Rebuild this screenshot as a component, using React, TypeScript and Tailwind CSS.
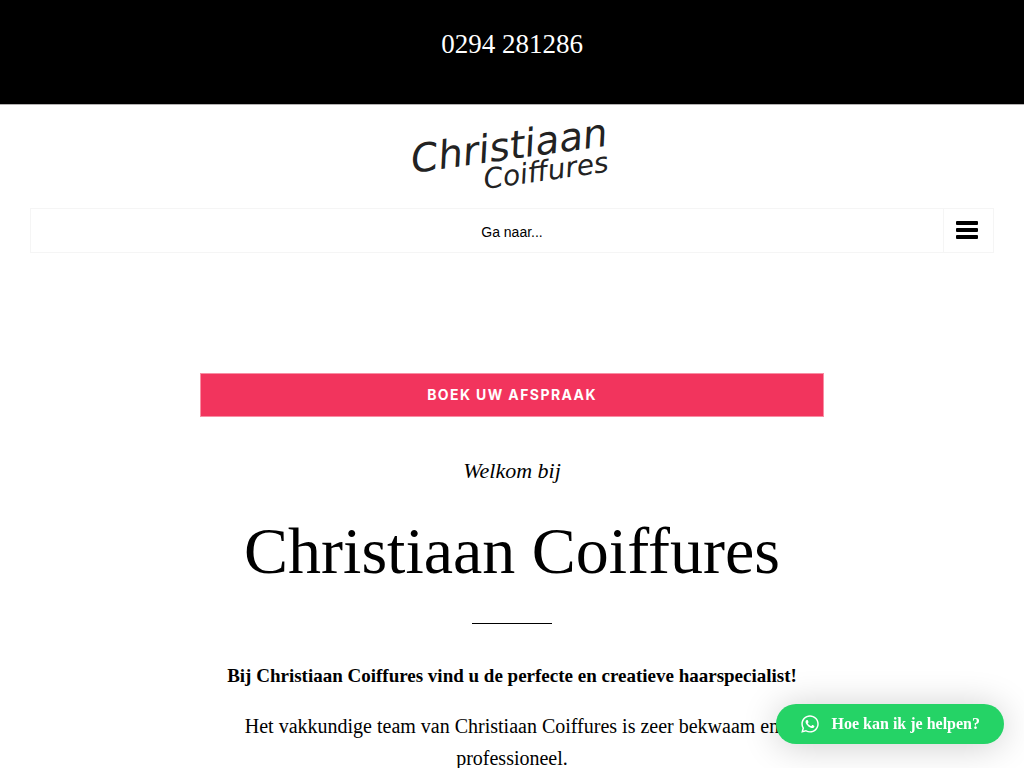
import { FaWhatsapp } from "react-icons/fa";

const Logo = () => (
  <svg
    width="204"
    height="69"
    viewBox="0 0 204 69"
    role="img"
    aria-label="Christiaan Coiffures"
    className="overflow-visible fill-[#222]"
  >
    <text
      transform="translate(3 51) rotate(-8)"
      className="font-['DejaVu_Sans',sans-serif] text-[39px] italic"
    >
      Christiaan
    </text>
    <text
      transform="translate(75 67) rotate(-8)"
      className="font-['DejaVu_Sans',sans-serif] text-[28px] italic"
    >
      Coiffures
    </text>
  </svg>
);

const MenuIcon = () => (
  <svg width="22" height="18" viewBox="0 0 22 18" aria-hidden="true">
    <rect width="22" height="4" rx="1" />
    <rect y="7" width="22" height="4" rx="1" />
    <rect y="14" width="22" height="4" rx="1" />
  </svg>
);

const TopBar = () => (
  <div className="border-b border-[#b3b1b1] bg-black pt-6 pb-10 text-center">
    <a
      href="tel:0294281286"
      className="block text-[27px] leading-10 font-medium text-white"
    >
      0294 281286
    </a>
  </div>
);

const Header = () => (
  <header className="px-[30px]">
    <a href="#" className="mx-auto block w-fit py-[17px]">
      <Logo />
    </a>
    <nav>
      <button
        type="button"
        className="flex h-[45px] w-full border border-[#f5f5f5] font-['Liberation_Sans',sans-serif] text-sm text-black"
      >
        <span className="flex-1 self-center pt-0.5 pl-[50px]">Ga naar...</span>
        <span className="flex w-[50px] items-center justify-center self-stretch border-l border-[#f5f5f5] pr-1 pb-0.5">
          <MenuIcon />
        </span>
      </button>
    </nav>
  </header>
);

const Welcome = () => (
  <main className="mx-auto w-full max-w-[624px] pt-[120px] text-center">
    <a
      href="#"
      className="block border border-[#f88ea3] bg-[#f2345d] py-[11px] font-['Inter',sans-serif] text-sm leading-5 font-bold tracking-widest text-white uppercase"
    >
      Boek uw afspraak
    </a>
    <p className="mt-[34px] text-[22px] leading-10 italic">Welkom bij</p>
    <h1 className="mt-5 text-[66px] leading-[80px]">Christiaan Coiffures</h1>
    <hr className="mx-auto mt-8 w-20 border-black" />
    <p className="mt-9 text-[19px] leading-8 font-bold">
      Bij Christiaan Coiffures vind u de perfecte en creatieve haarspecialist!
    </p>
    <p className="mt-[18px] text-xl leading-8">
      Het vakkundige team van Christiaan Coiffures is zeer bekwaam en
      professioneel.
    </p>
  </main>
);

const WhatsappButton = () => (
  <button
    type="button"
    className="fixed right-5 bottom-6 flex h-10 items-center gap-3 rounded-full bg-[#25d366] px-6 text-base font-bold text-white shadow-[0_2px_36px_rgba(0,0,0,0.2)]"
  >
    <FaWhatsapp size={20} />
    <span>Hoe kan ik je helpen?</span>
  </button>
);

const App = () => {
  return (
    <div className="min-h-screen bg-white font-['Liberation_Serif',serif] text-black">
      <TopBar />
      <Header />
      <Welcome />
      <WhatsappButton />
    </div>
  );
};

export default App;
